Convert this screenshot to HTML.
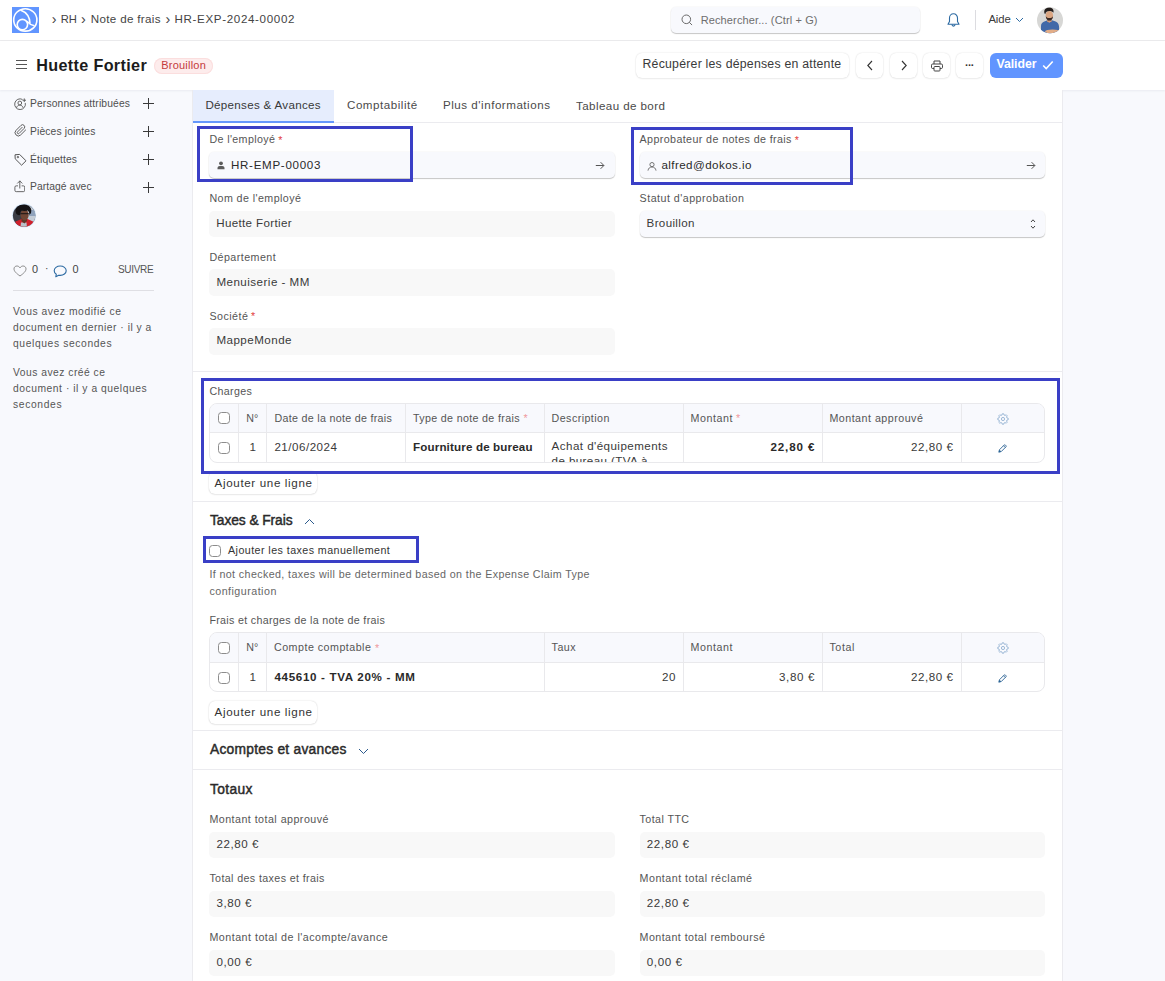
<!DOCTYPE html>
<html lang="fr">
<head>
<meta charset="utf-8">
<title>Note de frais - HR-EXP-2024-00002</title>
<style>
*{box-sizing:border-box;margin:0;padding:0}
html,body{width:1165px;height:981px;overflow:hidden}
body{font-family:"Liberation Sans",sans-serif;font-size:11.6px;color:#3a3a3a;background:#f8f9fd;position:relative}
.a{position:absolute}
.t{position:absolute;white-space:nowrap;line-height:1}
#nav{position:absolute;left:0;top:0;width:1165px;height:41px;background:#fff;border-bottom:1px solid #ebebed}
#head{position:absolute;left:0;top:41px;width:1165px;height:49px;background:#fff;box-shadow:0 1px 2px rgba(40,50,90,.07)}
.btn{position:absolute;top:53px;height:25px;background:#fff;border-radius:6px;box-shadow:0 0 1.5px rgba(0,0,0,.16),0 1px 2px rgba(0,0,0,.05)}
#main{position:absolute;left:192px;top:90px;width:871px;height:900px;background:#fff;border-left:1px solid #ebebef;border-right:1px solid #ebebef}
.hr{position:absolute;left:193px;width:869px;height:1px;background:#ebebef}
.inp{position:absolute;height:26px;border-radius:5px;background:#f8f9fd;box-shadow:0 1px 1px rgba(0,0,0,.21),0 0 0 1px rgba(0,0,0,.02)}
.ro{position:absolute;height:26px;border-radius:5px;background:#f8f8f8}
.hl{position:absolute;border:3px solid #3a3fc6}
.grid{position:absolute;left:209px;width:836px;height:60px;border:1px solid #e9e9ec;border-radius:8px;background:#fff;overflow:hidden}
.gh{position:absolute;left:0;top:0;width:100%;height:29px;background:#f8f9fd;border-bottom:1px solid #e9e9ec}
.vl{position:absolute;top:0;width:1px;height:100%;background:#e9e9ec}
.cb{position:absolute;width:12px;height:12px;border:1px solid #8c8c8c;border-radius:3.5px;background:#fff}
.ar{position:absolute;left:209px;width:108px;height:23px;background:#fff;border-radius:6px;box-shadow:0 0 1.5px rgba(0,0,0,.2),0 1px 2px rgba(0,0,0,.06)}
.pl{position:absolute;left:142.5px;width:11px;height:11px}
.pl:before{content:"";position:absolute;left:0;top:5px;width:11px;height:1px;background:#3a3a3a}
.pl:after{content:"";position:absolute;left:5px;top:0;width:1px;height:11px;background:#3a3a3a}
</style>
</head>
<body>
<!-- navbar -->
<div id="nav"></div>
<div class="a" style="left:12px;top:7px;width:27px;height:26px;background:#6195ff"><svg width="27" height="26" viewBox="0 0 27 26"><g fill="none" stroke="#fff" stroke-width="1.600"><ellipse cx="13.300" cy="12.900" rx="11.600" ry="11.200"/><circle cx="10.400" cy="17.600" r="5.200"/><path d="M8.400 2.900C13.500 4.800 17.800 9.500 18 16.300"/><path d="M14.800 14.200C16.500 16 19.500 18.300 22.500 18.800"/></g></svg></div>
<div class="t" style="top:12.00px;font-size:14.5px;left:51.70px;color:#444;">›</div>
<div class="t" style="top:12.00px;font-size:14.5px;left:80.90px;color:#444;">›</div>
<div class="t" style="top:12.00px;font-size:14.5px;left:165.50px;color:#444;">›</div>
<div class="t" style="top:14.00px;font-size:11.2px;left:60.80px;letter-spacing:-0.177px;color:#444;">RH</div>
<div class="t" style="top:13.00px;font-size:11.6px;left:90.80px;letter-spacing:0.328px;color:#444;">Note de frais</div>
<div class="t" style="top:13.00px;font-size:11.6px;left:174.50px;letter-spacing:0.649px;color:#444;">HR-EXP-2024-00002</div>
<div class="a" style="left:670.5px;top:7px;width:249px;height:26px;background:#f8f9fd;border-radius:5px;box-shadow:0 1px 1px rgba(0,0,0,.21),0 0 0 1px rgba(0,0,0,.02)"></div>
<svg class="a" style="left:681px;top:14px" width="12" height="12" viewBox="0 0 12 12"><circle cx="5.300" cy="5.300" r="4.300" fill="none" stroke="#6a6a6a" stroke-width="1"/><path d="M8.500 8.500L10.800 10.800" stroke="#6a6a6a" stroke-width="1" stroke-linecap="round"/></svg>
<div class="t" style="top:15.00px;font-size:11px;left:700.70px;letter-spacing:0.122px;color:#6e6e6e;">Rechercher... (Ctrl + G)</div>
<svg class="a" style="left:946px;top:12px" width="15" height="17" viewBox="0 0 15 17"><path d="M7.500 1.800c-2.500 0-4 1.900-4 4.300v3.400L2 12.200h11l-1.500-2.700V6.100c0-2.400-1.500-4.300-4-4.300z" fill="none" stroke="#2c6aa2" stroke-width="1.100" stroke-linejoin="round"/><path d="M6 12.500c0 .9.600 1.600 1.500 1.600S9 13.400 9 12.500" fill="none" stroke="#2c6aa2" stroke-width="1.100"/></svg>
<div class="a" style="left:975px;top:10px;width:1px;height:20px;background:#dcdce0"></div>
<div class="t" style="top:14.00px;font-size:11.3px;left:988.40px;letter-spacing:-0.072px;color:#3a3a3a;">Aide</div>
<svg class="a" style="left:1015px;top:17px" width="9" height="6" viewBox="0 0 9 6"><path d="M1 1l3.500 3.500L8 1" fill="none" stroke="#2c6aa2" stroke-width="1"/></svg>
<svg class="a" style="left:1037px;top:6.500px" width="26" height="27" viewBox="0 0 26 27"><defs><clipPath id="c1"><circle cx="13" cy="13.300" r="13"/></clipPath></defs><g clip-path="url(#c1)"><rect width="26" height="27" fill="#d7d7d5"/><path d="M4 27V19c0-2.500 1.500-4 4-4.800l2.500-.9h4.500l3 1c2.300.8 3.800 2.300 4 5l.5 7.700z" fill="#4169a8"/><rect x="10.200" y="11" width="4.300" height="4" fill="#c48d6c"/><path d="M10 14.300l2.300 1.500 2.400-1.500z" fill="#d9a27f"/><ellipse cx="12.400" cy="8.600" rx="3.700" ry="4.600" fill="#dba682"/><path d="M8.700 9.200c.4 3 1.800 4.400 3.700 4.400s3.300-1.400 3.700-4.400c-.9 1.300-2.200 1.800-3.700 1.800s-2.800-.5-3.700-1.800z" fill="#3a2a24"/><path d="M7.400 6.200C6.600 2.800 9 .6 12 .6s5 1.600 4.500 5.200c-.8-1.300-2.400-1.900-4.300-1.900S8.500 4.800 8.300 7.200z" fill="#241e1c"/><ellipse cx="15.500" cy="24.600" rx="7.500" ry="2.100" fill="#e2ad88"/></g></svg>
<!-- page head -->
<div id="head"></div>
<div class="a" style="left:16px;top:60px;width:11px;height:1px;background:#555;box-shadow:0 4px 0 #555,0 8px 0 #555"></div>
<div class="t" style="top:57.00px;font-size:16.2px;left:36.20px;letter-spacing:0.338px;font-weight:bold;color:#1c1c1c;">Huette Fortier</div>
<div class="a" style="left:154px;top:58px;width:58.500px;height:16px;border-radius:8px;background:#fdecec;box-shadow:inset 0 0 0 1px #fbdede"></div>
<div class="t" style="top:60.00px;font-size:11px;left:161.20px;letter-spacing:0.225px;color:#c43a3c;">Brouillon</div>
<div class="btn" style="left:635.500px;width:213px"></div>
<div class="t" style="top:58.00px;font-size:12.3px;left:642.50px;letter-spacing:0.226px;color:#3a3a3a;">Récupérer les dépenses en attente</div>
<div class="btn" style="left:856px;width:27px"><svg class="a" style="left:9.500px;top:7px" width="8" height="11" viewBox="0 0 8 11"><path d="M6 1L1.800 5.500 6 10" fill="none" stroke="#333" stroke-width="1.100"/></svg></div>
<div class="btn" style="left:889.500px;width:27px"><svg class="a" style="left:10px;top:7px" width="8" height="11" viewBox="0 0 8 11"><path d="M2 1l4.200 4.500L2 10" fill="none" stroke="#333" stroke-width="1.100"/></svg></div>
<div class="btn" style="left:923px;width:27px"><svg class="a" style="left:7.500px;top:7px" width="12" height="12" viewBox="0 0 12 12"><g fill="none" stroke="#444" stroke-width="1"><path d="M3 4V1h6v3"/><rect x="0.500" y="4" width="11" height="4.500" rx="1.200"/><rect x="3" y="6.500" width="6" height="4.500" rx=".8" fill="#fff"/></g></svg></div>
<div class="btn" style="left:956px;width:27px"></div>
<div class="t" style="top:60.00px;font-size:11px;left:965.00px;letter-spacing:-0.745px;font-weight:bold;color:#333;">···</div>
<div class="a" style="left:990px;top:53px;width:73px;height:25px;border-radius:6px;background:#6195ff"></div>
<div class="t" style="top:58.00px;font-size:12.3px;left:996.50px;letter-spacing:-0.057px;font-weight:bold;color:#fff;">Valider</div>
<svg class="a" style="left:1042px;top:60px" width="12" height="10" viewBox="0 0 12 10"><path d="M1.200 5.500l3 3 6.500-7" fill="none" stroke="#fff" stroke-width="1.600"/></svg>
<!-- form -->
<div id="main"></div>
<div class="a" style="left:193px;top:90px;width:141px;height:33px;background:#e6edfd;border-bottom:2px solid #6597fb"></div>
<div class="hr" style="top:122px;left:334px;width:728px"></div>
<div class="t" style="top:99.00px;font-size:11.6px;left:205.40px;letter-spacing:0.302px;color:#383838;">Dépenses &amp; Avances</div>
<div class="t" style="top:99.00px;font-size:11.6px;left:347.00px;letter-spacing:0.521px;color:#4a4a4a;">Comptabilité</div>
<div class="t" style="top:99.00px;font-size:11.6px;left:443.00px;letter-spacing:0.520px;color:#4a4a4a;">Plus d'informations</div>
<div class="t" style="top:100.00px;font-size:11.6px;left:576.00px;letter-spacing:0.414px;color:#4a4a4a;">Tableau de bord</div>
<!-- sidebar -->
<svg class="a" style="left:13.900px;top:97.600px" width="12.500" height="12.500" viewBox="0 0 14 14"><g fill="none" stroke="#555" stroke-width="1"><path d="M9.500 1.600A6 6 0 1 0 12.600 5.500"/><circle cx="6.500" cy="5.600" r="2.100"/><path d="M2.800 11c.5-2 2-3 3.700-3s3.200 1 3.700 3"/><path d="M11.500 0.500v4M9.500 2.500h4"/></g></svg>
<div class="t" style="top:99.00px;font-size:10.3px;left:30.00px;letter-spacing:0.140px;color:#4f4f4f;">Personnes attribuées</div>
<div class="pl" style="top:98px"></div>
<svg class="a" style="left:13.900px;top:124px" width="13" height="13" viewBox="0 0 24 24"><path d="M21.440 11.050l-9.190 9.190a6 6 0 0 1-8.490-8.490l9.190-9.190a4 4 0 0 1 5.660 5.660l-9.200 9.190a2 2 0 0 1-2.830-2.830l8.490-8.480" fill="none" stroke="#5a5a5a" stroke-width="1.800" stroke-linecap="round" stroke-linejoin="round"/></svg>
<div class="t" style="top:127.00px;font-size:10.3px;left:30.00px;letter-spacing:0.142px;color:#4f4f4f;">Pièces jointes</div>
<div class="pl" style="top:125.500px"></div>
<svg class="a" style="left:13.700px;top:152.600px" width="13" height="13" viewBox="0 0 13 13"><g fill="none" stroke="#555" stroke-width="1" stroke-linejoin="round"><path d="M1 1.800L1.200 5.800 7.600 12.200 12 7.800 5.600 1.400z"/><circle cx="3.900" cy="4.100" r=".7"/></g></svg>
<div class="t" style="top:155.00px;font-size:10.3px;left:30.00px;letter-spacing:0.133px;color:#4f4f4f;">Étiquettes</div>
<div class="pl" style="top:153.500px"></div>
<svg class="a" style="left:13.600px;top:180px" width="11.600" height="12.600" viewBox="0 0 13 14"><g fill="none" stroke="#555" stroke-width="1" stroke-linecap="round" stroke-linejoin="round"><path d="M4 6.500H2.500A1.500 1.500 0 0 0 1 8v3.500A1.500 1.500 0 0 0 2.500 13h8A1.500 1.500 0 0 0 12 11.500V8a1.500 1.500 0 0 0-1.500-1.500H9"/><path d="M6.500 9V1.200M4 3.500l2.500-2.500L9 3.500"/></g></svg>
<div class="t" style="top:182.00px;font-size:10.3px;left:30.00px;letter-spacing:0.082px;color:#4f4f4f;">Partagé avec</div>
<div class="pl" style="top:181.500px"></div>
<svg class="a" style="left:12.400px;top:203.200px" width="25" height="25" viewBox="0 0 25 25"><defs><clipPath id="c2"><circle cx="12.100" cy="12.600" r="11.200"/></clipPath></defs><circle cx="12.100" cy="12.600" r="12" fill="#d6e8fa"/><g clip-path="url(#c2)"><rect width="25" height="25" fill="#3a3c44"/><rect x="15" y="0" width="10" height="25" fill="#c4ccd6"/><rect x="17" y="7" width="8" height="6" fill="#8fa2bc"/><path d="M2 25l1.500-6.500 6-2.500h6l5.500 2.500L22.500 25z" fill="#cf202c"/><path d="M9 19.500h5.500l.5 5.500H8.500z" fill="#b9c1c9"/><path d="M9.500 14h5.500v4l-2.700 2.400L9.500 18z" fill="#5d3828"/><ellipse cx="12.600" cy="12" rx="4.100" ry="5.200" fill="#6f4534"/><path d="M8.400 10.700h8.400" stroke="#1a1414" stroke-width="1"/><path d="M3.800 9.500C2.500 4.500 7 1.400 11.500 1.400s9 2.600 7.600 8.200c-.4 1.500-1.300 2-1.800 2.400.2-2.400-.4-3.600-1.700-4.400-1.300.5-4.500.6-5.900 0-1.500 1-1.700 2.500-1.600 4.500-1.800.3-3.800-.3-4.300-2.600z" fill="#141214"/></g></svg>
<svg class="a" style="left:12.500px;top:264.500px" width="14" height="12" viewBox="0 0 14 12"><path d="M7 11C3.500 8.500 1 6.300 1 3.900 1 2.200 2.300 1 3.900 1 5.200 1 6.300 1.700 7 2.900 7.700 1.700 8.800 1 10.100 1 11.700 1 13 2.200 13 3.900 13 6.300 10.500 8.500 7 11z" fill="none" stroke="#8a8a8a" stroke-width="1" stroke-linejoin="round"/></svg>
<div class="t" style="top:264.00px;font-size:10.9px;left:32.00px;color:#444;">0</div>
<div class="t" style="top:264.00px;font-size:10.3px;left:45.00px;color:#444;">·</div>
<svg class="a" style="left:52.500px;top:264.500px" width="14" height="13" viewBox="0 0 14 13"><path d="M7.200 1C3.900 1 1.200 3.100 1.200 5.700c0 1.400.8 2.700 2.100 3.500L2.800 11.800 5.700 10.200c.5.100 1 .2 1.500.2 3.300 0 6-2.100 6-4.700S10.500 1 7.200 1z" fill="none" stroke="#2c6aa2" stroke-width="1.100" stroke-linejoin="round"/></svg>
<div class="t" style="top:264.00px;font-size:10.9px;left:72.60px;color:#444;">0</div>
<div class="t" style="top:265.00px;font-size:10px;left:118.00px;letter-spacing:-0.326px;color:#555;">SUIVRE</div>
<div class="a" style="left:13px;top:290px;width:141px;height:1px;background:#dfdfe4"></div>
<div class="t" style="top:307.00px;font-size:10.3px;left:13.00px;letter-spacing:0.561px;color:#555;">Vous avez modifié ce</div>
<div class="t" style="top:323.00px;font-size:10.3px;left:13.00px;letter-spacing:0.503px;color:#555;">document en dernier · il y a</div>
<div class="t" style="top:339.00px;font-size:10.3px;left:13.00px;letter-spacing:0.615px;color:#555;">quelques secondes</div>
<div class="t" style="top:368.00px;font-size:10.3px;left:13.00px;letter-spacing:0.490px;color:#555;">Vous avez créé ce</div>
<div class="t" style="top:384.00px;font-size:10.3px;left:13.00px;letter-spacing:0.535px;color:#555;">document · il y a quelques</div>
<div class="t" style="top:400.00px;font-size:10.3px;left:13.00px;letter-spacing:0.644px;color:#555;">secondes</div>
<div class="t" style="top:134.00px;font-size:10.7px;left:209.40px;letter-spacing:0.371px;color:#555;">De l'employé</div>
<div class="t" style="top:135.00px;font-size:10.7px;left:278.20px;color:#e2423d;">*</div>
<div class="inp" style="left:209px;top:152px;width:406px"></div>
<svg class="a" style="left:217px;top:161px" width="8" height="9" viewBox="0 0 8 9"><circle cx="4" cy="2.300" r="1.900" fill="#5c5c5c"/><path d="M.5 8.300V7c0-1.200 1-2 2.200-2h2.600c1.200 0 2.200.8 2.200 2v1.300z" fill="#5c5c5c"/></svg>
<div class="t" style="top:159.00px;font-size:11.6px;left:231.00px;letter-spacing:0.684px;color:#2a2a2a;">HR-EMP-00003</div>
<svg class="a" style="left:595px;top:160.5px" width="10" height="9" viewBox="0 0 10 9"><path d="M.8 4.500h8M5.600 1.200l3.300 3.300-3.300 3.300" fill="none" stroke="#555" stroke-width="1"/></svg>
<div class="t" style="top:193.00px;font-size:10.7px;left:209.40px;letter-spacing:0.420px;color:#555;">Nom de l'employé</div>
<div class="ro" style="left:209px;top:211px;width:406px"></div>
<div class="t" style="top:217.00px;font-size:11.6px;left:216.20px;letter-spacing:0.345px;color:#3a3a3a;">Huette Fortier</div>
<div class="t" style="top:252.00px;font-size:10.7px;left:209.40px;letter-spacing:0.455px;color:#555;">Département</div>
<div class="ro" style="left:209px;top:269px;width:406px;height:27px"></div>
<div class="t" style="top:276.00px;font-size:11.6px;left:216.40px;letter-spacing:0.473px;color:#3a3a3a;">Menuiserie - MM</div>
<div class="t" style="top:311.00px;font-size:10.7px;left:209.40px;letter-spacing:0.468px;color:#555;">Société</div>
<div class="t" style="top:311.00px;font-size:10.7px;left:251.10px;color:#e2423d;">*</div>
<div class="ro" style="left:209px;top:328px;width:406px;height:27px"></div>
<div class="t" style="top:334.00px;font-size:11.6px;left:216.40px;letter-spacing:0.474px;color:#3a3a3a;">MappeMonde</div>
<div class="t" style="top:134.00px;font-size:10.7px;left:639.60px;letter-spacing:0.394px;color:#555;">Approbateur de notes de frais</div>
<div class="t" style="top:135.00px;font-size:10.7px;left:794.80px;color:#e2423d;">*</div>
<div class="inp" style="left:640px;top:152px;width:405px"></div>
<svg class="a" style="left:647px;top:161.500px" width="10" height="9" viewBox="0 0 10 9"><g fill="none" stroke="#666" stroke-width=".9"><circle cx="5" cy="2.600" r="2.100"/><path d="M1 8.600c.3-2.300 1.800-3.600 4-3.600s3.700 1.300 4 3.600"/></g></svg>
<div class="t" style="top:159.00px;font-size:11.6px;left:661.40px;letter-spacing:0.429px;color:#2a2a2a;">alfred@dokos.io</div>
<svg class="a" style="left:1026px;top:160.5px" width="10" height="9" viewBox="0 0 10 9"><path d="M.8 4.500h8M5.600 1.200l3.300 3.300-3.300 3.300" fill="none" stroke="#555" stroke-width="1"/></svg>
<div class="t" style="top:193.00px;font-size:10.7px;left:639.60px;letter-spacing:0.471px;color:#555;">Statut d'approbation</div>
<div class="inp" style="left:640px;top:211px;width:405px"></div>
<div class="t" style="top:217.00px;font-size:11.6px;left:646.60px;letter-spacing:0.333px;color:#3a3a3a;">Brouillon</div>
<svg class="a" style="left:1030px;top:218px" width="6" height="12" viewBox="0 0 6 12"><path d="M1 4l2-2.200L5 4M1 8l2 2.200L5 8" fill="none" stroke="#444" stroke-width="1"/></svg>
<div class="hl" style="left:197px;top:126px;width:216px;height:56px"></div>
<div class="hl" style="left:631px;top:127px;width:222px;height:58px"></div>
<div class="hr" style="top:371px"></div>
<!-- charges -->
<div class="t" style="top:386.00px;font-size:10.7px;left:209.40px;letter-spacing:0.359px;color:#555;">Charges</div>
<div class="grid" style="top:403px"><div class="gh" style="height:29px"></div><div class="vl" style="left:28px"></div><div class="vl" style="left:56px"></div><div class="vl" style="left:195px"></div><div class="vl" style="left:334px"></div><div class="vl" style="left:473px"></div><div class="vl" style="left:612px"></div><div class="vl" style="left:751px"></div></div>
<div class="cb" style="left:218px;top:412px"></div>
<div class="cb" style="left:218px;top:442px"></div>
<div class="t" style="top:413.00px;font-size:10.7px;left:246.20px;letter-spacing:-0.006px;color:#555;">N°</div>
<div class="t" style="top:441.00px;font-size:11.6px;left:249.60px;color:#3a3a3a;">1</div>
<svg class="a" style="left:996.5px;top:412.8px" width="12" height="12" viewBox="0 0 12 12"><g fill="none" stroke="#94b2d2" stroke-width=".9" stroke-linejoin="round"><path d="M5.34 0.74L6.66 0.74L7.08 2.05L8.03 2.44L9.25 1.81L10.19 2.75L9.56 3.97L9.95 4.92L11.26 5.34L11.26 6.66L9.95 7.08L9.56 8.03L10.19 9.25L9.25 10.19L8.03 9.56L7.08 9.95L6.66 11.26L5.34 11.26L4.92 9.95L3.97 9.56L2.75 10.19L1.81 9.25L2.44 8.03L2.05 7.08L0.74 6.66L0.74 5.34L2.05 4.92L2.44 3.97L1.81 2.75L2.75 1.81L3.97 2.44L4.92 2.05z"/><circle cx="6" cy="6" r="1.600"/></g></svg>
<svg class="a" style="left:998.4px;top:443.5px" width="9" height="9" viewBox="0 0 10 10"><path d="M.9 9.100l.7-2.700L6.800 1.200a1 1 0 0 1 1.400 0l.6.600a1 1 0 0 1 0 1.400L3.600 8.400z" fill="none" stroke="#2a6294" stroke-width="1" stroke-linejoin="round"/><path d="M.9 9.100l.7-2.700 2 2z" fill="#2a6294"/><path d="M6.100 1.900l2 2" stroke="#2a6294" stroke-width=".9"/></svg>
<div class="t" style="top:413.00px;font-size:10.7px;left:274.40px;letter-spacing:0.303px;color:#555;">Date de la note de frais</div>
<div class="t" style="top:413.00px;font-size:10.7px;left:413.00px;letter-spacing:0.333px;color:#555;">Type de note de frais</div>
<div class="t" style="top:413.00px;font-size:10.7px;left:523.50px;color:#ef9a9e;">*</div>
<div class="t" style="top:413.00px;font-size:10.7px;left:551.60px;letter-spacing:0.428px;color:#555;">Description</div>
<div class="t" style="top:413.00px;font-size:10.7px;left:690.40px;letter-spacing:0.590px;color:#555;">Montant</div>
<div class="t" style="top:413.00px;font-size:10.7px;left:736.00px;color:#ef9a9e;">*</div>
<div class="t" style="top:413.00px;font-size:10.7px;left:829.40px;letter-spacing:0.490px;color:#555;">Montant approuvé</div>
<div class="t" style="top:441.00px;font-size:11.6px;left:274.40px;letter-spacing:0.505px;color:#3a3a3a;">21/06/2024</div>
<div class="t" style="top:441.00px;font-size:11.6px;left:413.00px;letter-spacing:0.155px;font-weight:bold;color:#2a2a2a;">Fourniture de bureau</div>
<div class="a" style="left:545px;top:433px;width:138px;height:29px;overflow:hidden"><div class="t" style="top:7.00px;font-size:11.6px;left:6.60px;letter-spacing:0.446px;color:#3a3a3a;">Achat d'équipements</div>
<div class="t" style="top:22.00px;font-size:11.6px;left:6.60px;letter-spacing:0.396px;color:#3a3a3a;">de bureau (TVA à</div>
</div>
<div class="t" style="top:441.00px;font-size:11.6px;left:770.40px;letter-spacing:0.883px;font-weight:bold;color:#2a2a2a;">22,80 €</div>
<div class="t" style="top:441.00px;font-size:11.6px;left:911.00px;letter-spacing:0.550px;color:#3a3a3a;">22,80 €</div>
<div class="ar" style="top:471px"></div>
<div class="t" style="top:477.00px;font-size:11.6px;left:214.60px;letter-spacing:0.646px;color:#333;">Ajouter une ligne</div>
<div class="hl" style="left:201px;top:378px;width:859px;height:96px"></div>
<div class="hr" style="top:501px"></div>
<!-- taxes -->
<div class="t" style="top:514.00px;font-size:13.8px;left:210.00px;letter-spacing:-0.082px;color:#2a2a2a;-webkit-text-stroke:.45px #2a2a2a;">Taxes &amp; Frais</div>
<svg class="a" style="left:303.500px;top:518px" width="11" height="7" viewBox="0 0 11 7"><path d="M1 6l4.500-4.500L10 6" fill="none" stroke="#2c5a8c" stroke-width="1"/></svg>
<div class="cb" style="left:209.400px;top:545px"></div>
<div class="t" style="top:545.00px;font-size:10.7px;left:228.00px;letter-spacing:0.438px;color:#333;">Ajouter les taxes manuellement</div>
<div class="hl" style="left:203px;top:536px;width:216px;height:27px"></div>
<div class="t" style="top:569.00px;font-size:10.7px;left:209.40px;letter-spacing:0.387px;color:#666;">If not checked, taxes will be determined based on the Expense Claim Type</div>
<div class="t" style="top:586.00px;font-size:10.7px;left:209.40px;letter-spacing:0.478px;color:#666;">configuration</div>
<div class="t" style="top:615.00px;font-size:10.7px;left:209.40px;letter-spacing:0.310px;color:#555;">Frais et charges de la note de frais</div>
<div class="grid" style="top:632px"><div class="gh" style="height:30px"></div><div class="vl" style="left:28px"></div><div class="vl" style="left:56px"></div><div class="vl" style="left:334px"></div><div class="vl" style="left:473px"></div><div class="vl" style="left:612px"></div><div class="vl" style="left:751px"></div></div>
<div class="cb" style="left:218px;top:642px"></div>
<div class="cb" style="left:218px;top:671.5px"></div>
<div class="t" style="top:642.00px;font-size:10.7px;left:246.20px;letter-spacing:-0.006px;color:#555;">N°</div>
<div class="t" style="top:671.00px;font-size:11.6px;left:249.60px;color:#3a3a3a;">1</div>
<svg class="a" style="left:996.5px;top:641.8px" width="12" height="12" viewBox="0 0 12 12"><g fill="none" stroke="#94b2d2" stroke-width=".9" stroke-linejoin="round"><path d="M5.34 0.74L6.66 0.74L7.08 2.05L8.03 2.44L9.25 1.81L10.19 2.75L9.56 3.97L9.95 4.92L11.26 5.34L11.26 6.66L9.95 7.08L9.56 8.03L10.19 9.25L9.25 10.19L8.03 9.56L7.08 9.95L6.66 11.26L5.34 11.26L4.92 9.95L3.97 9.56L2.75 10.19L1.81 9.25L2.44 8.03L2.05 7.08L0.74 6.66L0.74 5.34L2.05 4.92L2.44 3.97L1.81 2.75L2.75 1.81L3.97 2.44L4.92 2.05z"/><circle cx="6" cy="6" r="1.600"/></g></svg>
<svg class="a" style="left:998.4px;top:673.5px" width="9" height="9" viewBox="0 0 10 10"><path d="M.9 9.100l.7-2.700L6.800 1.200a1 1 0 0 1 1.400 0l.6.600a1 1 0 0 1 0 1.400L3.600 8.400z" fill="none" stroke="#2a6294" stroke-width="1" stroke-linejoin="round"/><path d="M.9 9.100l.7-2.700 2 2z" fill="#2a6294"/><path d="M6.100 1.900l2 2" stroke="#2a6294" stroke-width=".9"/></svg>
<div class="t" style="top:642.00px;font-size:10.7px;left:274.00px;letter-spacing:0.480px;color:#555;">Compte comptable</div>
<div class="t" style="top:643.00px;font-size:10.7px;left:375.00px;color:#ef9a9e;">*</div>
<div class="t" style="top:642.00px;font-size:10.7px;left:551.60px;letter-spacing:0.466px;color:#555;">Taux</div>
<div class="t" style="top:642.00px;font-size:10.7px;left:690.40px;letter-spacing:0.590px;color:#555;">Montant</div>
<div class="t" style="top:642.00px;font-size:10.7px;left:829.40px;letter-spacing:0.600px;color:#555;">Total</div>
<div class="t" style="top:671.00px;font-size:11.6px;left:274.40px;letter-spacing:0.680px;font-weight:bold;color:#2a2a2a;">445610 - TVA 20% - MM</div>
<div class="t" style="top:671.00px;font-size:11.6px;right:488.90px;letter-spacing:0.597px;color:#3a3a3a;">20</div>
<div class="t" style="top:671.00px;font-size:11.6px;right:349.97px;letter-spacing:0.630px;color:#3a3a3a;">3,80 €</div>
<div class="t" style="top:671.00px;font-size:11.6px;right:211.45px;letter-spacing:0.550px;color:#3a3a3a;">22,80 €</div>
<div class="ar" style="top:700.500px"></div>
<div class="t" style="top:706.00px;font-size:11.6px;left:214.60px;letter-spacing:0.646px;color:#333;">Ajouter une ligne</div>
<div class="hr" style="top:730px"></div>
<div class="t" style="top:743.00px;font-size:13.8px;left:210.00px;letter-spacing:0.248px;color:#2a2a2a;-webkit-text-stroke:.45px #2a2a2a;">Acomptes et avances</div>
<svg class="a" style="left:358px;top:747.500px" width="11" height="7" viewBox="0 0 11 7"><path d="M1 1l4.500 4.500L10 1" fill="none" stroke="#2c5a8c" stroke-width="1"/></svg>
<div class="hr" style="top:769px"></div>
<!-- totals -->
<div class="t" style="top:783.00px;font-size:13.8px;left:210.00px;letter-spacing:0.348px;color:#2a2a2a;-webkit-text-stroke:.45px #2a2a2a;">Totaux</div>
<div class="t" style="top:814.00px;font-size:10.7px;left:209.40px;letter-spacing:0.464px;color:#555;">Montant total approuvé</div>
<div class="ro" style="left:209px;top:832px;width:406px"></div>
<div class="t" style="top:838.00px;font-size:11.6px;left:216.40px;letter-spacing:0.583px;color:#3a3a3a;">22,80 €</div>
<div class="t" style="top:814.00px;font-size:10.7px;left:639.60px;letter-spacing:0.415px;color:#555;">Total TTC</div>
<div class="ro" style="left:640px;top:832px;width:405px"></div>
<div class="t" style="top:838.00px;font-size:11.6px;left:646.80px;letter-spacing:0.583px;color:#3a3a3a;">22,80 €</div>
<div class="t" style="top:873.00px;font-size:10.7px;left:209.40px;letter-spacing:0.380px;color:#555;">Total des taxes et frais</div>
<div class="ro" style="left:209px;top:891px;width:406px"></div>
<div class="t" style="top:897.00px;font-size:11.6px;left:216.40px;letter-spacing:0.550px;color:#3a3a3a;">3,80 €</div>
<div class="t" style="top:873.00px;font-size:10.7px;left:639.60px;letter-spacing:0.481px;color:#555;">Montant total réclamé</div>
<div class="ro" style="left:640px;top:891px;width:405px"></div>
<div class="t" style="top:897.00px;font-size:11.6px;left:646.80px;letter-spacing:0.583px;color:#3a3a3a;">22,80 €</div>
<div class="t" style="top:932.00px;font-size:10.7px;left:209.40px;letter-spacing:0.496px;color:#555;">Montant total de l'acompte/avance</div>
<div class="ro" style="left:209px;top:950px;width:406px"></div>
<div class="t" style="top:956.00px;font-size:11.6px;left:216.40px;letter-spacing:0.590px;color:#3a3a3a;">0,00 €</div>
<div class="t" style="top:932.00px;font-size:10.7px;left:639.60px;letter-spacing:0.433px;color:#555;">Montant total remboursé</div>
<div class="ro" style="left:640px;top:950px;width:405px"></div>
<div class="t" style="top:956.00px;font-size:11.6px;left:646.80px;letter-spacing:0.590px;color:#3a3a3a;">0,00 €</div>
</body>
</html>
